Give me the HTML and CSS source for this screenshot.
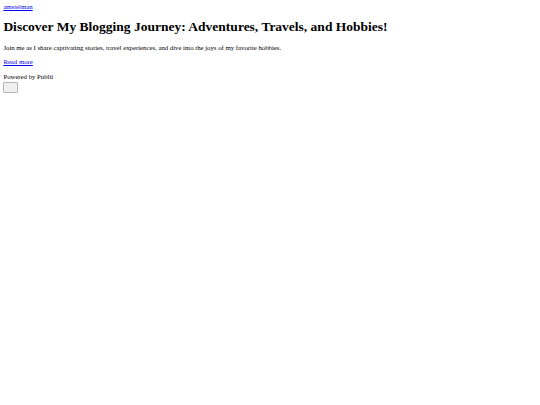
FILE: index.html
```html
<!DOCTYPE html>
<html lang="en">
<head>
<meta charset="utf-8">
<title>amstelman</title>
<link rel="stylesheet" href="styles.css">
</head>
<body>
<header class="site-header">
  <a class="logo" href="#">amstelman</a>
</header>
<main class="hero">
  <h1 class="hero-title">Discover My Blogging Journey: Adventures, Travels, and Hobbies!</h1>
  <p class="hero-text">Join me as I share captivating stories, travel experiences, and dive into the joys of my favorite hobbies.</p>
  <p class="hero-link"><a class="read-more" href="#">Read more</a></p>
</main>
<footer class="site-footer">
  <div class="powered">Powered by Publii</div>
  <button class="back-top" type="button"></button>
</footer>
</body>
</html>
```
FILE: styles.css
```css
html { background: #fff; }
body {
  margin: 3.375px;
  font-family: "Liberation Serif", "Times New Roman", serif;
  font-size: 6.75px;
  color: #000;
}
a { color: #0000ee; }
.hero-title {
  font-size: 13.5px;
  font-weight: bold;
  margin: 9.05px 0;
}
.hero-text,
.hero-link {
  margin: 6.75px 0;
}
.site-footer { padding-top: 1px; }
.back-top {
  display: block;
  width: 15px;
  height: 11px;
  margin-top: 2px;
  padding: 0;
  background: #efefef;
  border: 1px solid #b5b5b5;
  border-radius: 1px;
}
```
